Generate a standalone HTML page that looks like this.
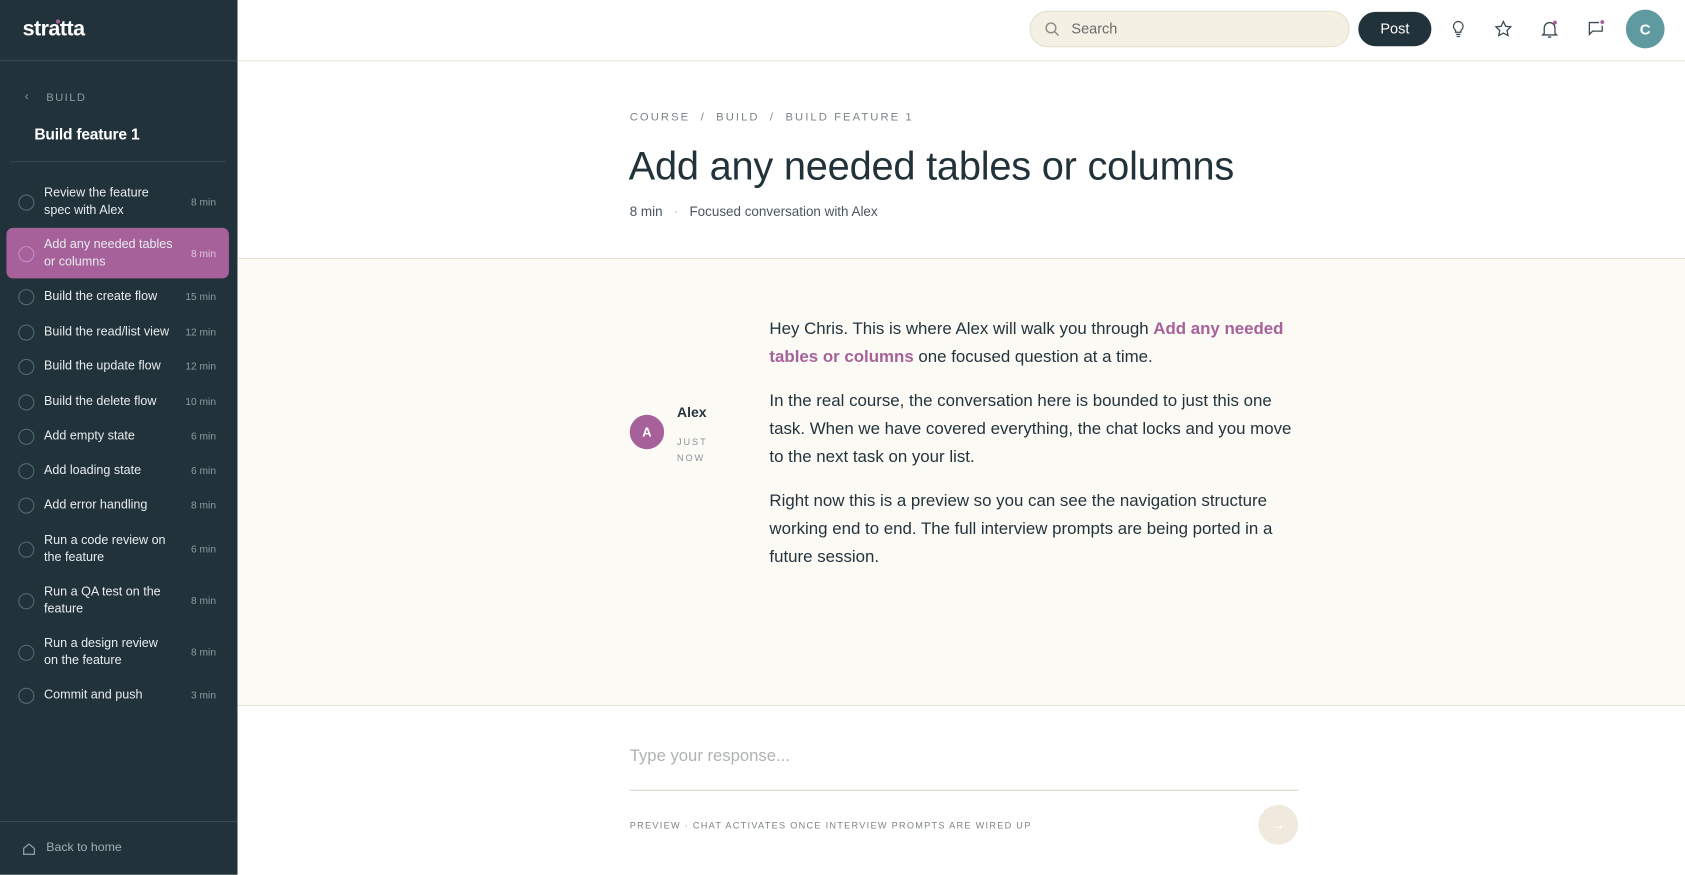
<!DOCTYPE html>
<html><head><meta charset="utf-8"><style>
*{box-sizing:border-box;margin:0;padding:0}
html,body{width:1685px;height:875px;overflow:hidden;background:#fff;font-family:"Liberation Sans",sans-serif}
#w{position:absolute;left:0;top:0;width:1568px;height:814px;transform:scale(1.07462);transform-origin:0 0}
.a{position:absolute;white-space:nowrap}
#sb{position:absolute;left:0;top:0;width:221px;height:814px;background:#22323a}
.it{position:absolute;left:6px;width:207px;}
.it .c{position:absolute;left:11px;width:15px;height:15px;border:1.3px solid #566a72;border-radius:50%}
.it .t{position:absolute;left:35px;color:#e6ecee;font-size:12px;line-height:15.5px;white-space:normal;width:122px}
.it .m{position:absolute;right:12px;color:#8d9ca1;font-size:9.5px}
.ic{position:absolute;top:17px;width:20px;height:20px}
p.msg{font-size:16px;line-height:26px;color:#24343c;margin-bottom:15px}
</style></head><body><div id="w">
<div id="sb">
 <div class="a" style="left:21px;top:16px;color:#fff;font-size:20px;font-weight:bold;letter-spacing:-0.5px">stratta</div>
 <div class="a" style="left:52px;top:18px;width:4px;height:4px;border-radius:50%;background:#a6619a"></div>
 <div class="a" style="left:0;top:56px;width:221px;height:1px;background:#3a4a52"></div>
 <div class="a" style="left:23px;top:84px;color:#8a9aa0;font-size:11px">&#8249;</div>
 <div class="a" style="left:43px;top:85px;color:#8a9aa0;font-size:10.5px;letter-spacing:1.3px">BUILD</div>
 <div class="a" style="left:32px;top:118px;color:#fff;font-size:14.5px;font-weight:bold;letter-spacing:-0.2px">Build feature 1</div>
 <div class="a" style="left:10px;top:150px;width:200px;height:1px;background:#3a4a52"></div>
 <div class="it" style="top:212px;height:47px;background:#a6619a;border-radius:6px"></div>
 <div id="items"></div>
 <div class="a" style="left:0;top:764px;width:221px;height:1px;background:#3a4a52"></div>
 <svg class="a" style="left:20px;top:783px" width="14" height="14" viewBox="0 0 14 14" fill="none" stroke="#8a9aa0" stroke-width="1.2"><path d="M2 6.5L7 2.5L12 6.5V12H2Z"/></svg>
 <div class="a" style="left:43px;top:783px;color:#a3b0b4;font-size:11.5px">Back to home</div>
</div>
<div class="a" style="left:221px;top:56px;width:1347px;height:1px;background:#e8e4d3"></div>
<div class="a" style="left:958px;top:10px;width:298px;height:34px;background:#f4f0e4;border:1px solid #e5dfcc;border-radius:17px"></div>
<svg class="a" style="left:972px;top:20px" width="14" height="14" viewBox="0 0 14 14" fill="none" stroke="#888" stroke-width="1.3"><circle cx="6" cy="6" r="4.5"/><path d="M9.5 9.5L13 13"/></svg>
<div class="a" style="left:997px;top:19px;font-size:13.5px;color:#6b6b6b">Search</div>
<div class="a" style="left:1264px;top:11px;width:68px;height:32px;background:#22323a;border-radius:16px;color:#fff;font-size:13.5px;text-align:center;line-height:32px">Post</div>
<svg class="ic" style="left:1347px" viewBox="0 0 20 20" fill="none" stroke="#3a4a52" stroke-width="1.2"><path d="M10 3a4.5 4.5 0 0 0-2.5 8.2V13h5v-1.8A4.5 4.5 0 0 0 10 3zM8 15h4M8.5 17h3"/></svg>
<svg class="ic" style="left:1389px" viewBox="0 0 20 20" fill="none" stroke="#3a4a52" stroke-width="1.2"><path d="M10 3l2.1 4.4 4.8.6-3.5 3.3.9 4.8L10 13.8 5.7 16.1l.9-4.8L3.1 8l4.8-.6z"/></svg>
<svg class="ic" style="left:1432px" viewBox="0 0 20 20" fill="none" stroke="#3a4a52" stroke-width="1.2"><path d="M5 14V9a5 5 0 0 1 10 0v5l1.5 1.5h-13zM8.5 17.5h3"/><circle cx="15" cy="4" r="1.8" fill="#a6619a" stroke="none"/></svg>
<svg class="ic" style="left:1475px" viewBox="0 0 20 20" fill="none" stroke="#3a4a52" stroke-width="1.2"><path d="M13 4H4v11l3-3h9V7"/><circle cx="16" cy="3.5" r="1.8" fill="#a6619a" stroke="none"/></svg>
<div class="a" style="left:1513px;top:9px;width:36px;height:36px;border-radius:50%;background:#5e9aa0;color:#fff;font-size:14px;font-weight:bold;text-align:center;line-height:36px">C</div>

<div class="a" style="left:586px;top:103px;font-size:10.5px;letter-spacing:1.9px;color:#7d8589">COURSE &nbsp;/ &nbsp;BUILD &nbsp;/ &nbsp;BUILD FEATURE 1</div>
<div class="a" style="left:585px;top:134px;font-size:37px;color:#22323a;letter-spacing:-0.2px">Add any needed tables or columns</div>
<div class="a" style="left:586px;top:190px;font-size:12.5px;color:#4a565c">8 min &nbsp;&nbsp;<span style="color:#bbb">·</span>&nbsp;&nbsp; Focused conversation with Alex</div>

<div class="a" style="left:221px;top:240px;width:1347px;height:417px;background:#fbfaf5;border-top:1px solid #e8e4d3;border-bottom:1px solid #e8e4d3"></div>
<div class="a" style="left:586px;top:386px;width:32px;height:32px;border-radius:50%;background:#a6619a;color:#fff;font-size:12px;font-weight:bold;text-align:center;line-height:32px">A</div>
<div class="a" style="left:630px;top:376px;font-size:13px;font-weight:bold;color:#24343c">Alex</div>
<div class="a" style="left:630px;top:404px;font-size:8.5px;letter-spacing:1.8px;color:#8a9296;line-height:15px">JUST<br>NOW</div>
<div class="a" style="left:716px;top:294px;width:495px;white-space:normal">
<p class="msg" style="font-size:15.7px">Hey Chris. This is where Alex will walk you through <b style="color:#a6619a">Add any needed tables or columns</b> one focused question at a time.</p>
<p class="msg" style="font-size:15.7px">In the real course, the conversation here is bounded to just this one task. When we have covered everything, the chat locks and you move to the next task on your list.</p>
<p class="msg" style="font-size:15.7px">Right now this is a preview so you can see the navigation structure working end to end. The full interview prompts are being ported in a future session.</p>
</div>
<div class="a" style="left:586px;top:695px;font-size:15.5px;color:#b0b3b3">Type your response...</div>
<div class="a" style="left:586px;top:735px;width:622px;height:1px;background:#d8d6cc"></div>
<div class="a" style="left:586px;top:763px;font-size:8.5px;letter-spacing:1.2px;color:#7d8589">PREVIEW · CHAT ACTIVATES ONCE INTERVIEW PROMPTS ARE WIRED UP</div>
<div class="a" style="left:1171px;top:749px;width:37px;height:37px;border-radius:50%;background:#efeadd;color:#fff;text-align:center;line-height:37px;font-size:13px">→</div>
</div>
<script>
var d=[["Review the feature spec with Alex","8 min",188],["Add any needed tables or columns","8 min",236],["Build the create flow","15 min",276],["Build the read/list view","12 min",309],["Build the update flow","12 min",341],["Build the delete flow","10 min",374],["Add empty state","6 min",406],["Add loading state","6 min",438],["Add error handling","8 min",470],["Run a code review on the feature","6 min",511],["Run a QA test on the feature","8 min",559],["Run a design review on the feature","8 min",607],["Commit and push","3 min",647]];
var h="";d.forEach(function(x){var two=x[0].length>24;var hl=x[2]==236;h+='<div class="it" style="top:'+(x[2]-10)+'px;height:20px"><div class="c" style="top:2.5px;'+(hl?'border-color:#c58fbb':'')+'"></div><div class="t" style="top:'+(two?-6:2)+'px;font-size:11.7px">'+x[0]+'</div><div class="m" style="top:5px;'+(hl?'color:#e2c6dd':'')+'">'+x[1]+'</div></div>'});
document.getElementById("items").innerHTML=h;
</script>
</body></html>
